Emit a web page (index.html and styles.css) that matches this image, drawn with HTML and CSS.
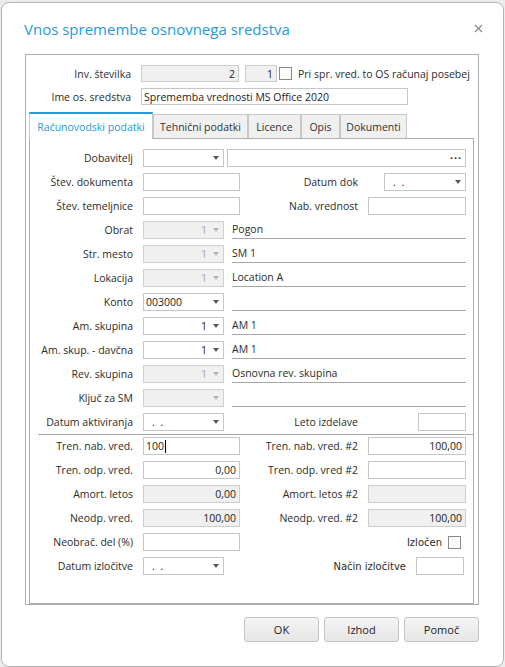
FILE: index.html
```html
<!DOCTYPE html>
<html lang="sl">
<head>
    <meta charset="UTF-8">
    <meta name="viewport" content="width=device-width, initial-scale=1.0">
    <title>Vnos spremembe osnovnega sredstva</title>
    <link rel="stylesheet" href="styles.css">
</head>
<body>

    <div class="dialog">
        <!-- Title bar -->
        <div class="dialog-head">
            <h1 class="dialog-title">Vnos spremembe osnovnega sredstva</h1>
            <button class="close-btn" title="Zapri">
                <svg width="9" height="9" viewBox="0 0 9 9"><path d="M1 1L8 8M8 1L1 8" stroke="#8e8e8e" stroke-width="1.3" fill="none"/></svg>
            </button>
        </div>

        <div class="group">
            <!-- Asset header -->
            <div class="top-row">
                <label class="top-lbl">Inv. številka</label>
                <input class="inp ro num inv-no" type="text" value="2" readonly>
                <input class="inp ro num inv-sub" type="text" value="1" readonly>
                <span class="chk"></span>
                <span class="chk-text">Pri spr. vred. to OS računaj posebej</span>
            </div>
            <div class="top-row">
                <label class="top-lbl">Ime os. sredstva</label>
                <input class="inp asset-name" type="text" value="Sprememba vrednosti MS Office 2020">
            </div>

            <!-- Tabs -->
            <div class="tabs">
                <button class="tab active tab-acc">Računovodski podatki</button>
                <button class="tab tab-tech">Tehnični podatki</button>
                <button class="tab tab-lic">Licence</button>
                <button class="tab tab-desc">Opis</button>
                <button class="tab tab-docs">Dokumenti</button>
            </div>

            <div class="tab-panel">
                <div class="rows">
                    <div class="row">
                        <label class="lbl">Dobavitelj</label>
                        <div class="combo"><span class="val"></span></div>
                        <div class="inp lookup"><span class="dots">...</span></div>
                    </div>
                    <div class="row">
                        <label class="lbl">Štev. dokumenta</label>
                        <div class="cell"><input class="inp full" type="text"></div>
                        <label class="lbl2">Datum dok</label>
                        <div class="cell2"><div class="combo date date-doc"><span class="val">. .</span></div></div>
                    </div>
                    <div class="row">
                        <label class="lbl">Štev. temeljnice</label>
                        <div class="cell"><input class="inp full" type="text"></div>
                        <label class="lbl2">Nab. vrednost</label>
                        <div class="cell2"><input class="inp full" type="text"></div>
                    </div>
                    <div class="row">
                        <label class="lbl">Obrat</label>
                        <div class="combo disabled num"><span class="val">1</span></div>
                        <span class="linked">Pogon</span>
                    </div>
                    <div class="row">
                        <label class="lbl">Str. mesto</label>
                        <div class="combo disabled num"><span class="val">1</span></div>
                        <span class="linked">SM 1</span>
                    </div>
                    <div class="row">
                        <label class="lbl">Lokacija</label>
                        <div class="combo disabled num"><span class="val">1</span></div>
                        <span class="linked">Location A</span>
                    </div>
                    <div class="row">
                        <label class="lbl">Konto</label>
                        <div class="combo"><span class="val">003000</span></div>
                        <span class="linked"></span>
                    </div>
                    <div class="row">
                        <label class="lbl">Am. skupina</label>
                        <div class="combo num"><span class="val">1</span></div>
                        <span class="linked">AM 1</span>
                    </div>
                    <div class="row">
                        <label class="lbl">Am. skup. - davčna</label>
                        <div class="combo num"><span class="val">1</span></div>
                        <span class="linked">AM 1</span>
                    </div>
                    <div class="row">
                        <label class="lbl">Rev. skupina</label>
                        <div class="combo disabled num"><span class="val">1</span></div>
                        <span class="linked">Osnovna rev. skupina</span>
                    </div>
                    <div class="row">
                        <label class="lbl">Ključ za SM</label>
                        <div class="combo disabled"><span class="val"></span></div>
                        <span class="linked"></span>
                    </div>
                    <div class="row">
                        <label class="lbl">Datum aktiviranja</label>
                        <div class="cell"><div class="combo date"><span class="val">. .</span></div></div>
                        <label class="lbl2">Leto izdelave</label>
                        <div class="cell2"><input class="inp small" type="text"></div>
                    </div>
                </div>

                <div class="sep"></div>

                <!-- Values -->
                <div class="rows">
                    <div class="row">
                        <label class="lbl">Tren. nab. vred.</label>
                        <div class="cell"><div class="inp full editing">100<span class="caret"></span></div></div>
                        <label class="lbl2">Tren. nab. vred. #2</label>
                        <div class="cell2"><input class="inp full num" type="text" value="100,00"></div>
                    </div>
                    <div class="row">
                        <label class="lbl">Tren. odp. vred.</label>
                        <div class="cell"><input class="inp full num" type="text" value="0,00"></div>
                        <label class="lbl2">Tren. odp. vred #2</label>
                        <div class="cell2"><input class="inp full num" type="text"></div>
                    </div>
                    <div class="row">
                        <label class="lbl">Amort. letos</label>
                        <div class="cell"><input class="inp full ro num" type="text" value="0,00" readonly></div>
                        <label class="lbl2">Amort. letos #2</label>
                        <div class="cell2"><input class="inp full ro num" type="text" readonly></div>
                    </div>
                    <div class="row">
                        <label class="lbl">Neodp. vred.</label>
                        <div class="cell"><input class="inp full ro num" type="text" value="100,00" readonly></div>
                        <label class="lbl2">Neodp. vred. #2</label>
                        <div class="cell2"><input class="inp full ro num" type="text" value="100,00" readonly></div>
                    </div>
                    <div class="row">
                        <label class="lbl">Neobrač. del (%)</label>
                        <div class="cell"><input class="inp full" type="text"></div>
                        <label class="lbl2 tahoma chk-lbl">Izločen</label>
                        <span class="chk chk-right"></span>
                    </div>
                    <div class="row">
                        <label class="lbl">Datum izločitve</label>
                        <div class="cell"><div class="combo date"><span class="val">. .</span></div></div>
                        <label class="lbl2 tahoma way-lbl">Način izločitve</label>
                        <input class="inp small way-inp" type="text">
                    </div>
                </div>
            </div>
        </div>

        <div class="actions">
            <button class="btn">OK</button>
            <button class="btn">Izhod</button>
            <button class="btn">Pomoč</button>
        </div>
    </div>

</body>
</html>
```

FILE: styles.css
```css
body {
    margin: 0;
    background-color: #ececec;
    font-family: "Open Sans", "Noto Sans", sans-serif;
    font-size: 10.5px;
    color: #2b2b2b;
}
.dialog {
    box-sizing: border-box;
    width: 503px;
    height: 665px;
    margin: 2px 0 0 1px;
    background-color: #fff;
    border: 1px solid #b4b4b4;
    border-radius: 8px;
}
/* Title bar */
.dialog-head {
    display: flex;
    align-items: center;
    justify-content: space-between;
    height: 51px;
    padding: 0 20px 0 22px;
}
.dialog-title {
    margin: 0;
    font-size: 15px;
    font-weight: normal;
    color: #1f9ae0;
}
.close-btn {
    border: none;
    background: none;
    padding: 0;
    width: 9px;
    height: 9px;
    display: flex;
}
/* Group box */
.group {
    box-sizing: border-box;
    width: 454px;
    height: 551px;
    margin-left: 23px;
    border: 1px solid #adadad;
    padding-top: 10px;
}
.top-row {
    display: flex;
    align-items: center;
    height: 17px;
    margin-bottom: 6px;
}
.top-lbl {
    width: 105px;
    margin-right: 10px;
    text-align: right;
    white-space: nowrap;
}
/* Inputs */
.inp {
    box-sizing: border-box;
    height: 18px;
    border: 1px solid #c6c6c6;
    background-color: #fff;
    padding: 0 3px;
    font-family: inherit;
    font-size: 10.5px;
    color: #222;
    outline: none;
    margin: 0;
}
.top-row .inp {
    height: 17px;
}
.inp.ro {
    background-color: #f0f0f0;
    border-color: #cdcdcd;
}
.inp.num {
    text-align: right;
}
.inv-no {
    width: 98px;
}
.inv-sub {
    width: 32px;
    margin-left: 6px;
}
.asset-name {
    width: 267px;
    padding-left: 2px;
}
.chk {
    box-sizing: border-box;
    width: 13px;
    height: 13px;
    border: 1px solid #8a8a8a;
    background-color: #fbfbfb;
    margin-left: 2px;
}
.chk-text {
    margin-left: 6px;
    white-space: nowrap;
}
/* Tabs */
.tabs {
    display: flex;
    align-items: flex-end;
    height: 26px;
    margin: 7px 0 0 3px;
}
.tab {
    box-sizing: border-box;
    height: 24px;
    padding: 0;
    border: 1px solid #c8c8c8;
    border-bottom: none;
    background-color: #f0f0f0;
    font-family: inherit;
    font-size: 10.5px;
    color: #333;
    text-align: center;
}
.tab.active {
    position: relative;
    z-index: 1;
    height: 27px;
    margin-bottom: -1px;
    border-top: 2px solid #1f9ae0;
    background-color: #fff;
    color: #1f9ae0;
}
.tab-acc { width: 124px; }
.tab-tech { width: 95px; }
.tab-lic { width: 53px; }
.tab-desc { width: 39px; }
.tab-docs { width: 67px; }
/* Tab panel */
.tab-panel {
    box-sizing: border-box;
    width: 445px;
    height: 466px;
    margin-left: 3px;
    border: 1px solid #adadad;
    padding: 10px 7px 0 0;
}
.rows {
    display: flex;
    flex-direction: column;
    gap: 6px;
}
.row {
    display: flex;
    align-items: center;
    height: 18px;
}
.lbl {
    flex: none;
    width: 103px;
    margin-right: 10px;
    text-align: right;
    white-space: nowrap;
}
.lbl2 {
    flex: 1;
    margin-right: 10px;
    text-align: right;
    white-space: nowrap;
}
.cell {
    flex: none;
    width: 97px;
    display: flex;
}
.cell2 {
    flex: none;
    width: 98px;
    display: flex;
    justify-content: flex-end;
}
.inp.full {
    width: 100%;
}
.inp.small {
    width: 48px;
}
.editing {
    display: flex;
    align-items: center;
    padding-left: 2px;
}
.caret {
    width: 1px;
    height: 13px;
    background-color: #000;
    margin-left: 1px;
}
/* Combo boxes */
.combo {
    box-sizing: border-box;
    flex: none;
    width: 81px;
    height: 18px;
    display: flex;
    align-items: center;
    border: 1px solid #c6c6c6;
    background-color: #fff;
    padding: 0 4px 0 2px;
    color: #222;
}
.combo .val {
    flex: 1;
    white-space: nowrap;
}
.combo::after {
    content: "";
    border-left: 3.5px solid transparent;
    border-right: 3.5px solid transparent;
    border-top: 4px solid #5c5c5c;
    margin-left: 6px;
}
.combo.num .val {
    text-align: right;
}
.combo.disabled {
    background-color: #f0f0f0;
    border-color: #d0d0d0;
    color: #a9a9a9;
}
.combo.disabled::after {
    border-top-color: #b4b4b4;
}
.combo.date .val {
    padding-left: 6px;
    word-spacing: 3px;
}
.date-doc {
    width: 82px;
}
.lookup {
    flex: 1;
    margin-left: 3px;
    display: flex;
    align-items: center;
    justify-content: flex-end;
}
.dots {
    font-weight: bold;
    letter-spacing: 1px;
    line-height: 1;
    margin-top: -5px;
}
.linked {
    flex: 1;
    box-sizing: border-box;
    height: 18px;
    margin-left: 8px;
    border-bottom: 1px solid #a6a6a6;
    line-height: 17px;
    white-space: nowrap;
}
.sep {
    height: 1px;
    background-color: #a8a8a8;
    margin: 3px -7px 2px 8px;
}
.tahoma {
    font-family: "DejaVu Sans", sans-serif;
    font-size: 10px;
}
.chk-lbl {
    margin-right: 6px;
}
.chk-right {
    margin: 0 5px 0 0;
}
.way-lbl {
    margin-right: 10px;
}
.way-inp {
    margin-right: 2px;
}
/* Dialog buttons */
.actions {
    display: flex;
    justify-content: flex-end;
    gap: 5px;
    margin-top: 12px;
    padding-right: 24px;
}
.btn {
    box-sizing: border-box;
    width: 75px;
    height: 25px;
    border: 1px solid #c4c4c4;
    border-radius: 3px;
    background: linear-gradient(#f4f4f4, #e6e6e6);
    font-family: "Open Sans", sans-serif;
    font-size: 11px;
    color: #222;
}
```
